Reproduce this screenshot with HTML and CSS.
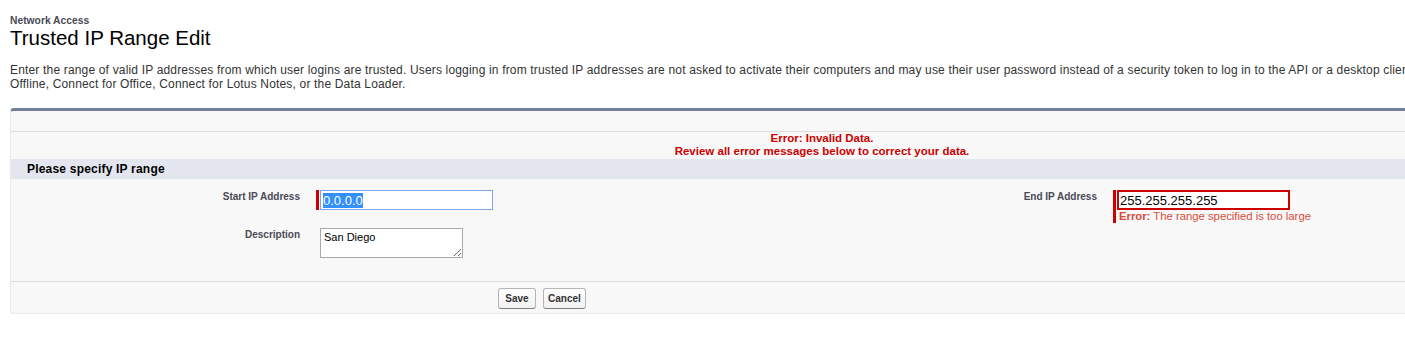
FILE: index.html
```html
<!DOCTYPE html>
<html lang="en">
<head>
  <meta charset="UTF-8">
  <title>Trusted IP Range Edit</title>
  <link rel="stylesheet" href="styles.css">
</head>
<body>
  <div class="page">
    <div class="page-head">
      <div class="page-type">Network Access</div>
      <h1 class="page-title">Trusted IP Range Edit</h1>
    </div>

    <p class="page-desc">Enter the range of valid IP addresses from which user logins are trusted. Users logging in from trusted IP addresses are not asked to activate their computers and may use their user password instead of a security token to log in to the API or a desktop client such as Connect for Outlook, Salesforce for Outlook, Connect<br>Offline, Connect for Office, Connect for Lotus Notes, or the Data Loader.</p>

    <div class="block">
      <div class="block-top"></div>

      <div class="block-error">
        <div>Error: Invalid Data.</div>
        <div>Review all error messages below to correct your data.</div>
      </div>

      <div class="subheader">Please specify IP range</div>

      <div class="fields">
        <label class="label-col" for="startIp">Start IP Address</label>
        <div class="data-col">
          <div class="required">
            <input type="text" id="startIp" class="text-input focused" value="0.0.0.0">
          </div>
        </div>

        <label class="label-col" for="endIp">End IP Address</label>
        <div class="data-col">
          <div class="required">
            <input type="text" id="endIp" class="text-input invalid" value="255.255.255.255">
            <div class="field-error"><strong>Error:</strong> The range specified is too large</div>
          </div>
        </div>

        <label class="label-col" for="desc">Description</label>
        <div class="data-col">
          <textarea id="desc" class="text-area">San Diego</textarea>
        </div>
        <div class="label-col"></div>
        <div class="data-col"></div>
      </div>

      <div class="block-bottom">
        <div class="btn-spacer"></div>
        <button class="btn">Save</button>
        <button class="btn">Cancel</button>
      </div>
    </div>
  </div>

  <script>
    const start = document.getElementById('startIp');
    start.focus();
    start.select();
  </script>
</body>
</html>
```

FILE: styles.css
```css
html, body {
  overflow: hidden;
}

body {
  margin: 0;
  background: #fff;
  font-family: 'Liberation Sans', Arial, sans-serif;
  color: #333;
}

.page {
  width: 1624px;
  padding: 0 10px;
}

.page-head {
  padding-top: 15px;
}

.page-type {
  font-size: 10.3px;
  font-weight: bold;
  color: #4a4a56;
  line-height: 11px;
}

.page-title {
  margin: 0;
  font-size: 20.5px;
  font-weight: normal;
  color: #000;
  line-height: 24px;
}

.page-desc {
  width: 1900px;
  margin: 13px 0 0;
  font-size: 12px;
  letter-spacing: 0.17px;
  line-height: 14px;
  color: #333;
}

.block {
  margin-top: 17px;
  background: #f8f8f8;
  border: 1px solid #eaeaea;
  border-top: 3px solid #747e96;
  border-radius: 4px;
}

.block-top {
  height: 20px;
  border-bottom: 1px solid #dbdbdb;
}

.block-error {
  padding: 0 0 1px;
  text-align: center;
  color: #c00;
  font-size: 11.5px;
  font-weight: bold;
  line-height: 13px;
}

.subheader {
  height: 20px;
  line-height: 20px;
  padding-left: 16px;
  background: #e3e6ee;
  font-size: 12px;
  font-weight: bold;
  letter-spacing: 0.2px;
  color: #000;
}

.fields {
  display: grid;
  grid-template-columns: 298px 500px 297px 1fr;
  padding: 11px 0 23px;
  row-gap: 5px;
}

.label-col {
  padding-right: 9px;
  padding-top: 1px;
  text-align: right;
  font-size: 10px;
  font-weight: bold;
  color: #4a4a56;
  line-height: 12px;
}

.data-col {
  padding-left: 7px;
}

.required {
  border-left: 3px solid #c00;
  padding-left: 1px;
  margin-top: 1px;
}

.text-input {
  display: block;
  box-sizing: border-box;
  width: 173px;
  height: 20px;
  margin: -1px 0 0;
  padding: 1px 2px;
  font-family: 'Liberation Sans', Arial, sans-serif;
  font-size: 13px;
  background: #fff;
  color: #000;
}

.text-input.focused {
  border: 1px solid #7aa7e9;
  outline: none;
}

.text-input.focused::selection {
  background: #3390ff;
  color: #fff;
}

.text-input.invalid {
  border: 2px solid #c00;
  padding: 0 1px;
}

.field-error {
  padding: 0 0 1px 2px;
  font-size: 11.3px;
  line-height: 12px;
  color: #d74c3b;
}

.text-area {
  display: block;
  box-sizing: border-box;
  width: 143px;
  height: 30px;
  margin-left: 4px;
  padding: 2px 3px;
  border: 1px solid #a9a9a9;
  font-family: 'Liberation Sans', Arial, sans-serif;
  font-size: 11px;
  color: #000;
  background: #fff;
  resize: both;
}

.block-bottom {
  display: flex;
  gap: 7px;
  align-items: center;
  padding: 6px 0 4px;
  border-top: 1px solid #dbdbdb;
}

.btn-spacer {
  width: 487px;
  flex: none;
  margin-right: -7px;
}

.btn {
  min-width: 38px;
  height: 21px;
  padding: 0 4px;
  background: linear-gradient(#fff, #f1f1f1);
  border: 1px solid #b5b5b5;
  border-bottom-color: #7f7f7f;
  border-radius: 3px;
  font-family: 'Liberation Sans', Arial, sans-serif;
  font-size: 10px;
  font-weight: bold;
  color: #333;
}
```
